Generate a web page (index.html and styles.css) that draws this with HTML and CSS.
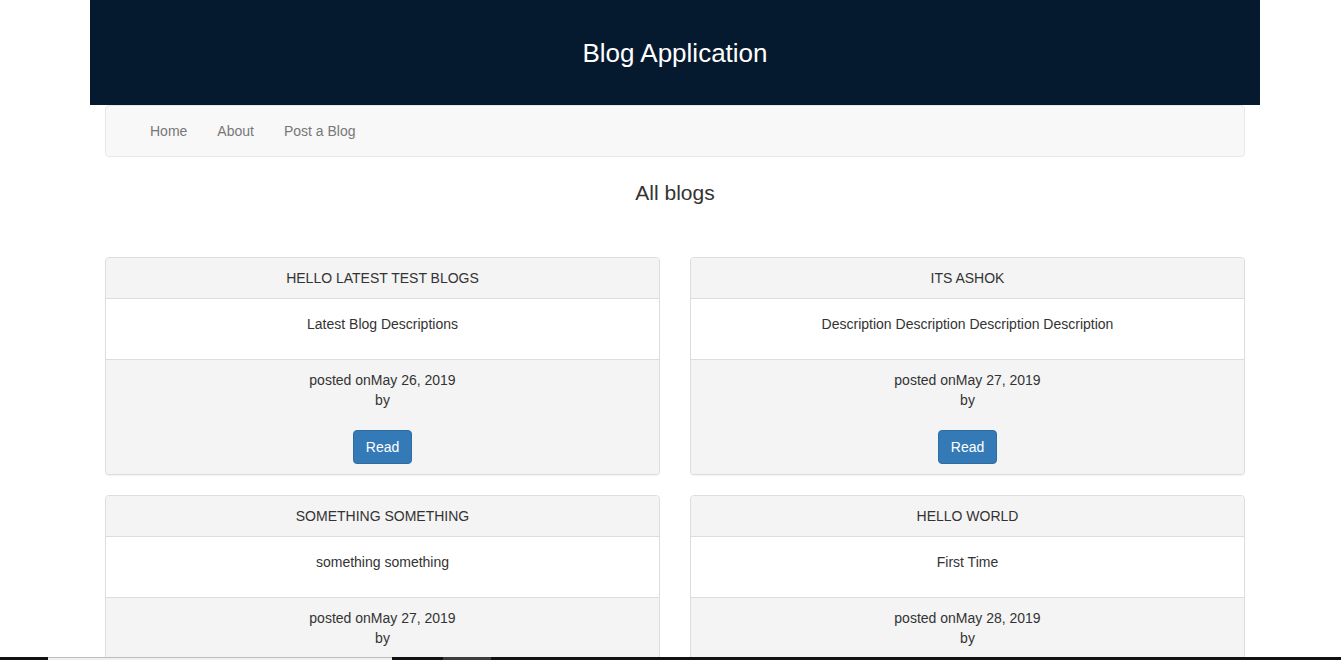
FILE: index.html
```html
<!DOCTYPE html>
<html lang="en">
<head>
<meta charset="utf-8">
<title>Blog Application</title>
<link rel="stylesheet" href="styles.css">
</head>
<body>
<div class="container">
  <header class="jumbo">
    <h1 class="jumbo-title">Blog Application</h1>
  </header>
  <nav class="navbar">
    <ul class="nav">
      <li><a href="#">Home</a></li>
      <li><a href="#">About</a></li>
      <li><a href="#">Post a Blog</a></li>
    </ul>
  </nav>
  <h3 class="page-title">All blogs</h3>
  <div class="grid">
    <div class="card">
      <div class="card-head">HELLO LATEST TEST BLOGS</div>
      <div class="card-body"><p>Latest Blog Descriptions</p></div>
      <div class="card-foot">
        <div>posted onMay 26, 2019</div>
        <div>by</div>
        <button class="btn">Read</button>
      </div>
    </div>
    <div class="card">
      <div class="card-head">ITS ASHOK</div>
      <div class="card-body"><p>Description Description Description Description</p></div>
      <div class="card-foot">
        <div>posted onMay 27, 2019</div>
        <div>by</div>
        <button class="btn">Read</button>
      </div>
    </div>
    <div class="card">
      <div class="card-head">SOMETHING SOMETHING</div>
      <div class="card-body"><p>something something</p></div>
      <div class="card-foot">
        <div>posted onMay 27, 2019</div>
        <div>by</div>
        <button class="btn">Read</button>
      </div>
    </div>
    <div class="card">
      <div class="card-head">HELLO WORLD</div>
      <div class="card-body"><p>First Time</p></div>
      <div class="card-foot">
        <div>posted onMay 28, 2019</div>
        <div>by</div>
        <button class="btn">Read</button>
      </div>
    </div>
  </div>
</div>
<div class="taskbar">
  <span class="tb-seg tb-dark tb-w48"></span>
  <span class="tb-seg tb-light tb-w344"></span>
  <span class="tb-seg tb-dark tb-w51"></span>
  <span class="tb-seg tb-mid tb-w48"></span>
  <span class="tb-seg tb-dark tb-fill"></span>
</div>
</body>
</html>
```

FILE: styles.css
```css
html {
  scrollbar-width: none;
}
html::-webkit-scrollbar {
  display: none;
}
body {
  margin: 0;
  font-family: "Liberation Sans", Arial, Helvetica, sans-serif;
  font-size: 14px;
  line-height: 20px;
  color: #333;
  background: #fff;
}
.container {
  width: 1170px;
  margin-left: 90px;
}
.jumbo {
  height: 105px;
  background: #061a2f;
  display: flex;
  align-items: center;
  justify-content: center;
}
.jumbo-title {
  margin: 0;
  color: #fff;
  font-size: 26px;
  font-weight: normal;
  line-height: 1.1;
  padding-top: 2px;
}
.navbar {
  margin: 0 15px;
  height: 50px;
  border: 1px solid #e7e7e7;
  border-radius: 4px;
  background: #f8f8f8;
  display: flex;
  align-items: center;
}
.nav {
  list-style: none;
  margin: 0;
  padding: 0 0 0 30px;
  display: flex;
}
.nav a {
  display: block;
  padding: 15px 15px 15px 14px;
  margin-right: 1px;
  color: #777;
  text-decoration: none;
}
.page-title {
  margin: 24px 0 0;
  text-align: center;
  font-size: 21px;
  font-weight: normal;
  line-height: 1.1;
  color: #333;
}
.grid {
  margin: 53px 15px 0;
  display: grid;
  grid-template-columns: 555px 555px;
  column-gap: 30px;
  row-gap: 20px;
}
.card {
  border: 1px solid #ddd;
  border-radius: 4px;
  box-shadow: 0 1px 1px rgba(0,0,0,0.05);
  background: #f4f4f4;
  text-align: center;
  overflow: hidden;
}
.card-head {
  padding: 10px 15px;
  background: #f4f4f4;
  border-bottom: 1px solid #ddd;
}
.card-body {
  padding: 15px;
  background: #fff;
  border-bottom: 1px solid #ddd;
}
.card-body p {
  margin: 0 0 10px;
}
.card-foot {
  padding: 10px 15px;
  background: #f4f4f4;
  display: flex;
  flex-direction: column;
  align-items: center;
}
.btn {
  margin-top: 20px;
  font-family: inherit;
  font-size: 14px;
  line-height: 20px;
  padding: 6px 12px;
  color: #fff;
  background: #337ab7;
  border: 1px solid #2e6da4;
  border-radius: 4px;
}
.taskbar {
  position: fixed;
  left: 0;
  right: 0;
  bottom: 0;
  height: 3px;
  display: flex;
}
.tb-seg {
  display: block;
  height: 3px;
  box-sizing: border-box;
}
.tb-dark { background: #111; }
.tb-mid { background: #3c3c3c; }
.tb-light { background: #f0f0f0; border-top: 1px solid #bdbdbd; }
.tb-w48 { width: 48px; }
.tb-w344 { width: 344px; }
.tb-w51 { width: 51px; }
.tb-fill { flex: 1; }
```
